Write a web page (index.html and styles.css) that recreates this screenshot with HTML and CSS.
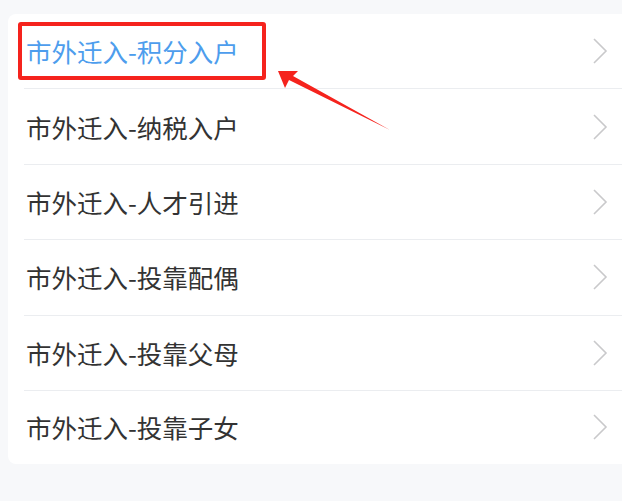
FILE: index.html
```html
<!DOCTYPE html>
<html lang="zh-CN">
<head>
<meta charset="utf-8">
<link rel="stylesheet" href="styles.css">
</head>
<body>
<div class="page">
  <ul class="list">
    <li class="row active">
      <span class="label highlight">市外迁入-积分入户</span>
      <svg class="chev" width="16" height="28" viewBox="0 0 16 28"><path d="M2 2 L14 14 L2 26" fill="none" stroke="#c9c9cb" stroke-width="1.6"/></svg>
    </li>
    <li class="row"><span class="label">市外迁入-纳税入户</span><svg class="chev" width="16" height="28" viewBox="0 0 16 28"><path d="M2 2 L14 14 L2 26" fill="none" stroke="#c9c9cb" stroke-width="1.6"/></svg></li>
    <li class="row"><span class="label">市外迁入-人才引进</span><svg class="chev" width="16" height="28" viewBox="0 0 16 28"><path d="M2 2 L14 14 L2 26" fill="none" stroke="#c9c9cb" stroke-width="1.6"/></svg></li>
    <li class="row"><span class="label">市外迁入-投靠配偶</span><svg class="chev" width="16" height="28" viewBox="0 0 16 28"><path d="M2 2 L14 14 L2 26" fill="none" stroke="#c9c9cb" stroke-width="1.6"/></svg></li>
    <li class="row"><span class="label">市外迁入-投靠父母</span><svg class="chev" width="16" height="28" viewBox="0 0 16 28"><path d="M2 2 L14 14 L2 26" fill="none" stroke="#c9c9cb" stroke-width="1.6"/></svg></li>
    <li class="row"><span class="label">市外迁入-投靠子女</span><svg class="chev" width="16" height="28" viewBox="0 0 16 28"><path d="M2 2 L14 14 L2 26" fill="none" stroke="#c9c9cb" stroke-width="1.6"/></svg></li>
  </ul>
  <svg class="arrow" width="130" height="80" viewBox="270 60 130 80">
    <polygon points="278,71 298,71 293,76 390,130 289,80 285,88" fill="#f5231d"/>
  </svg>
</div>
</body>
</html>
```
FILE: styles.css
```css
html, body {
  margin: 0;
  padding: 0;
  background: #f7f8fa;
  overflow: hidden;
}
body {
  width: 622px;
  height: 501px;
  font-family: "Noto Sans CJK SC", "Noto Sans", sans-serif;
}
.page {
  position: relative;
  padding: 14px 0 0 8px;
}
.list {
  list-style: none;
  margin: 0;
  padding: 0;
  width: 630px;
  background: #fff;
  border-radius: 8px;
}
.row {
  display: flex;
  align-items: center;
  height: 75.4px;
  margin-left: 16px;
  padding-left: 2px;
  border-bottom: 1px solid #ebedf0;
  box-sizing: border-box;
}
.row:last-child {
  border-bottom: none;
  height: 73px;
}
.label {
  font-size: 25.5px;
  font-weight: 400;
  color: #333333;
  line-height: 34px;
  flex: 1;
}
.label.highlight {
  color: #4d9ded;
  position: relative;
}
.label.highlight::before {
  content: "";
  position: absolute;
  left: -8px;
  top: -12px;
  width: 240px;
  height: 50px;
  border: 4px solid #f5231d;
  border-radius: 3px;
}
.chev {
  margin-right: 30px;
}
.arrow {
  position: absolute;
  left: 270px;
  top: 60px;
}
```
